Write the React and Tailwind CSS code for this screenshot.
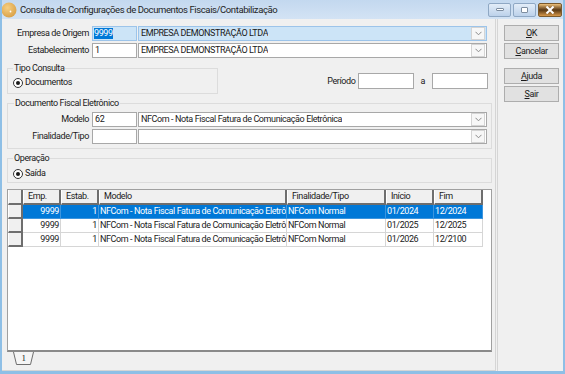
import React from "react";

const rows = [
  { emp: "9999", estab: "1", modelo: "NFCom - Nota Fiscal Fatura de Comunicação Eletrônica", fin: "NFCom Normal", ini: "01/2024", fim: "12/2024", sel: true },
  { emp: "9999", estab: "1", modelo: "NFCom - Nota Fiscal Fatura de Comunicação Eletrônica", fin: "NFCom Normal", ini: "01/2025", fim: "12/2025" },
  { emp: "9999", estab: "1", modelo: "NFCom - Nota Fiscal Fatura de Comunicação Eletrônica", fin: "NFCom Normal", ini: "01/2026", fim: "12/2100" },
];

function Chevron() {
  return (
    <div className="w-[14px] h-[13px] mr-[1px] border border-[#d4d4d4] bg-[#f7f7f7] flex items-center justify-center">
      <svg width="7" height="5" viewBox="0 0 7 5">
        <path d="M0.5 0.8 L3.5 3.8 L6.5 0.8" fill="none" stroke="#8a8a8a" strokeWidth="1" />
      </svg>
    </div>
  );
}

function Combo({ value, hi }) {
  return (
    <div className={`w-[349px] h-[15px] border ${hi ? "border-[#9cc4ea] bg-[#cce4f7]" : "border-[#a8a8a8] bg-white"} flex items-center justify-between`}>
      <span className="pl-[2px] truncate">{value}</span>
      <Chevron />
    </div>
  );
}

function Field({ label, code, combo, hiCode, hi }) {
  return (
    <div className="flex items-center h-[15px]">
      <div className="w-[88px] text-right pr-[1px]">{label}</div>
      <div className={`ml-[2px] w-[45px] h-[15px] border flex items-center ${hiCode ? "border-[#9cc4ea] bg-[#cce4f7]" : "border-[#a8a8a8] bg-white"}`}>
        {hiCode ? (
          <span className="ml-[1px] bg-[#0078d7] text-white leading-[11px]">{code}</span>
        ) : (
          <span className="pl-[2px]">{code}</span>
        )}
      </div>
      <div className="ml-[1px]">
        <Combo value={combo} hi={hi} />
      </div>
    </div>
  );
}

function Radio({ label }) {
  return (
    <div className="flex items-center h-[11px]">
      <span className="w-[10px] h-[10px] rounded-full border border-[#333] bg-white flex items-center justify-center">
        <span className="w-[4px] h-[4px] rounded-full bg-[#1a1a1a]" />
      </span>
      <span className="ml-[2px]">{label}</span>
    </div>
  );
}

function Btn({ first, rest }) {
  return (
    <div className="w-[55px] h-[16px] border border-[#adadad] bg-[#e1e1e1] flex items-center justify-center">
      <span>
        <span className="underline underline-offset-1">{first}</span>
        {rest}
      </span>
    </div>
  );
}

const cols = [
  { key: "emp", label: "Emp.", w: "w-[38px]", right: true },
  { key: "estab", label: "Estab.", w: "w-[38px]", right: true },
  { key: "modelo", label: "Modelo", w: "w-[188px]" },
  { key: "fin", label: "Finalidade/Tipo", w: "w-[99px]" },
  { key: "ini", label: "Início", w: "w-[48px]" },
  { key: "fim", label: "Fim", w: "w-[49px]" },
];

export default function App() {
  return (
    <div className="w-[565px] h-[374px] bg-[#f0f0f0] flex flex-col overflow-hidden text-[9px] leading-[11px] tracking-[-0.4px] text-[#1a1a1a] font-['Roboto',sans-serif] border-x-2 border-b-[3px] border-[#8ebfe6]">
      {/* title bar */}
      <div className="h-[19px] -mx-[2px] bg-gradient-to-b from-[#c3d8ef] to-[#d3e3f4] flex items-center">
        <svg width="16" height="16" viewBox="0 0 16 16" className="ml-[1px]">
          <defs>
            <radialGradient id="ic" cx="0.4" cy="0.35" r="0.7">
              <stop offset="0" stopColor="#f6cf82" />
              <stop offset="1" stopColor="#d9a046" />
            </radialGradient>
          </defs>
          <circle cx="8" cy="8" r="7.5" fill="url(#ic)" />
          <circle cx="9.5" cy="9.5" r="0.9" fill="#fff" />
        </svg>
        <span className="ml-[3px] text-[9.5px] text-[#1e1e1e]">Consulta de Configurações de Documentos Fiscais/Contabilização</span>
        <div className="ml-auto mr-[3px] flex gap-[2px] items-center">
          <div className="w-[23px] h-[14px] rounded-[2px] border border-[#8fa8c4] bg-gradient-to-b from-[#e3edf8] to-[#bcd1ea] flex items-center justify-center">
            <span className="w-[8px] h-[3px] rounded-[1px] border border-[#7d8da0] bg-white" />
          </div>
          <div className="w-[23px] h-[14px] rounded-[2px] border border-[#8fa8c4] bg-gradient-to-b from-[#e3edf8] to-[#bcd1ea] flex items-center justify-center">
            <span className="w-[7px] h-[6px] rounded-[1px] border border-[#7d8da0] bg-white" />
          </div>
          <div className="w-[24px] h-[14px] rounded-[2px] border border-[#7a5a2e] bg-gradient-to-b from-[#f0c37d] via-[#5a3a16] to-[#d99a4b] flex items-center justify-center">
            <svg width="10" height="8" viewBox="0 0 10 8">
              <path d="M1.5 0.5 L8.5 7.5 M8.5 0.5 L1.5 7.5" stroke="#fff" strokeWidth="2" />
            </svg>
          </div>
        </div>
      </div>

      <div className="flex flex-1">
        {/* main panel */}
        <div className="w-[494px] border-r border-b border-[#d5d5d5] flex flex-col">
          <div className="mt-[7px] flex flex-col gap-[2px]">
            <Field label="Empresa de Origem" code="9999" hiCode hi combo="EMPRESA DEMONSTRAÇÃO LTDA" />
            <Field label="Estabelecimento" code="1" combo="EMPRESA DEMONSTRAÇÃO LTDA" />
          </div>

          <div className="mt-[5px] flex items-start">
            <fieldset className="ml-[5px] w-[211px] h-[31px] border border-[#dcdcdc] px-[5px]">
              <legend className="px-[1px] leading-[11px]">Tipo Consulta</legend>
              <div className="pt-[3px]">
                <Radio label="Documentos" />
              </div>
            </fieldset>
            <div className="ml-auto mt-[10px] mr-[7px] flex items-center">
              <span>Período</span>
              <div className="ml-[2px] w-[56px] h-[16px] border border-[#a8a8a8] bg-white" />
              <span className="ml-[7px]">a</span>
              <div className="ml-[7px] w-[56px] h-[16px] border border-[#a8a8a8] bg-white" />
            </div>
          </div>

          <fieldset className="mt-[4px] ml-[5px] w-[485px] h-[51px] border border-[#dcdcdc]">
            <legend className="ml-[6px] px-[1px] leading-[11px]">Documento Fiscal Eletrônico</legend>
            <div className="pt-[3px] -ml-[6px] flex flex-col gap-[2px]">
              <Field label="Modelo" code="62" combo="NFCom - Nota Fiscal Fatura de Comunicação Eletrônica" />
              <Field label="Finalidade/Tipo" code="" combo="" />
            </div>
          </fieldset>

          <fieldset className="mt-[4px] ml-[5px] w-[485px] h-[30px] border border-[#dcdcdc] px-[5px]">
            <legend className="px-[1px] leading-[11px]">Operação</legend>
            <div className="pt-[4px]">
              <Radio label="Saída" />
            </div>
          </fieldset>

          {/* grid */}
          <div className="mt-[6px] ml-[5px] w-[485px] h-[163px] bg-white border border-[#a0a0a0] border-b-2 border-b-[#8a8a8a]">
            <div className="flex h-[15px]">
              <div className="w-[15px] bg-[#f0f0f0] border-r-2 border-b-2 border-[#6e6e6e] border-l border-l-white" />
              {cols.map((c) => (
                <div key={c.key} className={`${c.w} bg-[#f0f0f0] border-r-2 border-b-2 border-[#6e6e6e] border-l border-l-white pl-[4px] flex items-center overflow-hidden whitespace-nowrap`}>
                  {c.label}
                </div>
              ))}
            </div>
            {rows.map((r, i) => (
              <div key={i} className="flex h-[14px]">
                <div className="w-[15px] bg-[#f0f0f0] border-r-2 border-b-2 border-[#6e6e6e] border-l border-l-white" />
                {cols.map((c) => (
                  <div
                    key={c.key}
                    className={`${c.w} border-r border-b px-[1px] flex items-center overflow-hidden whitespace-nowrap ${c.right ? "justify-end" : ""} ${r.sel ? "bg-[#0078d7] text-white border-[#3d95de]" : "border-[#d6d6d6]"}`}
                  >
                    <span className="shrink-0">{r[c.key]}</span>
                  </div>
                ))}
              </div>
            ))}
          </div>

          <div className="ml-[11px] relative w-[21px] h-[13px]">
            <svg width="21" height="13" viewBox="0 0 21 13" className="absolute inset-0">
              <path d="M0.5 0 L3.5 12.5 L17.5 12.5 L20.5 0" fill="#f5f5f5" stroke="#6e6e6e" strokeWidth="1" />
            </svg>
            <span className="absolute inset-0 flex items-center justify-center font-['Liberation_Serif',serif] text-[9px]">1</span>
          </div>
        </div>

        {/* right panel */}
        <div className="flex-1 ml-[1px] border-l border-[#d5d5d5] flex flex-col pl-[6px] pt-[6px]">
          <div className="flex flex-col gap-[2px]">
            <Btn first="O" rest="K" />
            <Btn first="C" rest="ancelar" />
          </div>
          <div className="mt-[9px] flex flex-col gap-[2px]">
            <Btn first="A" rest="juda" />
            <Btn first="S" rest="air" />
          </div>
        </div>
      </div>
    </div>
  );
}
